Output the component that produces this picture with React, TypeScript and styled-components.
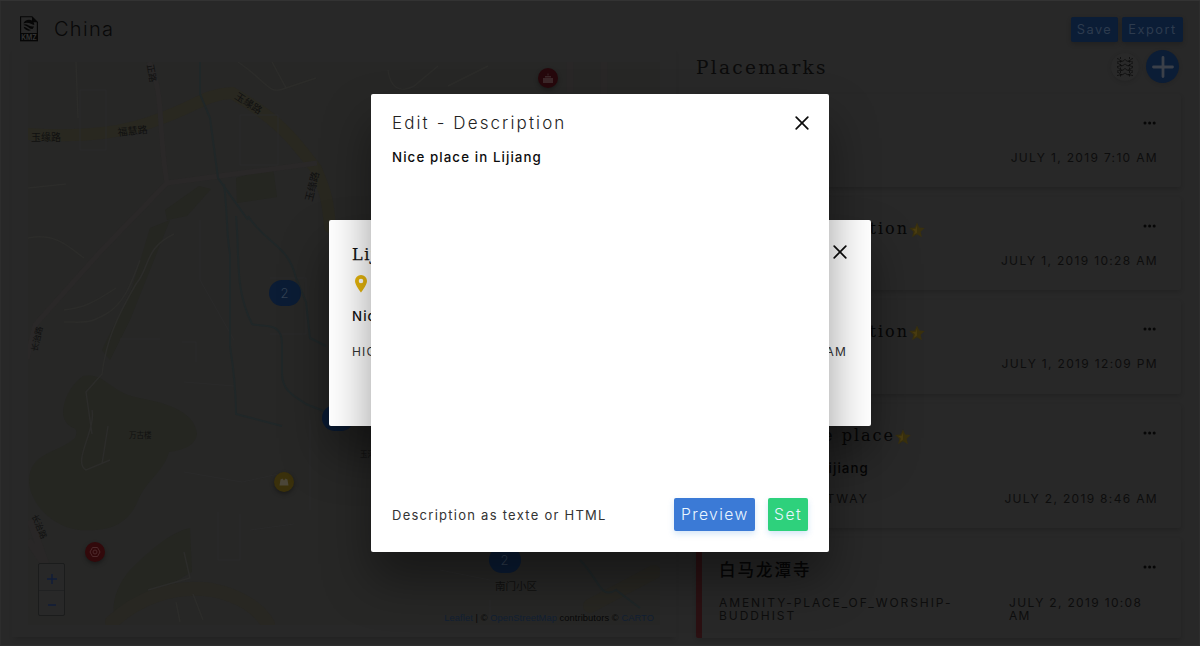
import React from 'react';
import styled, { createGlobalStyle } from 'styled-components';

const sans = `Inter, "Noto Sans", "Noto Sans CJK SC", sans-serif`;
const serif = `"DejaVu Serif", "Liberation Serif", "Noto Sans CJK SC", serif`;

const GlobalStyle = createGlobalStyle`
  *, *::before, *::after { box-sizing: border-box; }
  body { margin: 0; background: #282828; font-family: ${sans}; color: #0a0a0a; overflow: hidden; }
`;

const Page = styled.div`
  position: relative;
  width: 1200px;
  height: 646px;
  overflow: hidden;
  background: #282828;
  box-shadow: inset 0 1px 0 #333, inset 1px 0 0 #2d2d2d, inset -1px 0 0 #2d2d2d, inset 0 -1px 0 #2d2d2d;
`;

const Header = styled.header`
  display: flex;
  align-items: flex-start;
  height: 48px;
  padding: 16px 17px 0 20px;
`;

const DocName = styled.h1`
  margin: 0 auto 0 16px;
  font: 300 20px/26px ${sans};
  letter-spacing: 1.3px;
  color: #080808;
`;

const BarButton = styled.button<{ $width: number }>`
  width: ${p => p.$width}px;
  height: 25px;
  margin: 1px 0 0 4px;
  padding: 0;
  border: 0;
  border-radius: 2px;
  background: #0b1d36;
  color: #2d3b4e;
  font: 400 12.8px/25px ${sans};
  letter-spacing: 1.5px;
  box-shadow: 0 2px 5px rgba(0, 0, 0, 0.2);
`;

const Main = styled.main`
  display: flex;
  height: 598px;
`;

const MapPanel = styled.section`
  width: 664px;
  height: 589px;
  margin-left: 12px;
  padding: 14px 12px 12px 16px;
  box-shadow: 0 4px 5px -2px rgba(0, 0, 0, 0.15);
`;

const MapCanvas = styled.div`
  position: relative;
  width: 632px;
  height: 563px;
  overflow: hidden;
  background: #272726;
`;

const MapArt = styled.svg`
  display: block;
`;

const Pin = styled.div<{ $x: number; $y: number; $color: string }>`
  position: absolute;
  left: ${p => p.$x - 10}px;
  top: ${p => p.$y - 10}px;
  display: flex;
  align-items: center;
  justify-content: center;
  width: 20px;
  height: 20px;
  border-radius: 50%;
  background: ${p => p.$color};
  box-shadow: 0 2px 4px rgba(0, 0, 0, 0.35);
`;

const Cluster = styled.div<{ $x: number; $y: number }>`
  position: absolute;
  left: ${p => p.$x - 15.5}px;
  top: ${p => p.$y - 13}px;
  width: 32px;
  height: 26px;
  border-radius: 13px;
  background: #0b1c35;
  color: #324052;
  font: 300 13px/26px ${sans};
  text-align: center;
`;

const ZoomControl = styled.div`
  position: absolute;
  left: 10px;
  bottom: 9px;
  width: 27px;
  height: 53px;
  border: 1px solid #1b1c1c;
  border-radius: 2px;
  background: #282828;
`;

const ZoomButton = styled.div`
  display: flex;
  align-items: center;
  justify-content: center;
  height: 26px;
  padding-top: 3px;
  & + & { border-top: 1px solid #202122; }
`;

const Attribution = styled.div`
  position: absolute;
  right: 6px;
  bottom: 0;
  font: 9.3px/13px "Liberation Sans", sans-serif;
  letter-spacing: 0.08px;
  white-space: nowrap;
  color: #080808;
  span { color: #111f33; }
`;

const Sidebar = styled.section`
  width: 504px;
  padding: 0 0 0 20px;
`;

const SidebarHead = styled.div`
  display: flex;
  align-items: flex-start;
  height: 46px;
  padding: 2px 1px 0 0;
`;

const SidebarTitle = styled.h2`
  margin: 4px auto 0 0;
  font: 400 18.5px/28px ${serif};
  letter-spacing: 2.3px;
  color: #0b0b0b;
`;

const RoundButton = styled.div<{ $size: number; $bg: string; $top?: number; $gap?: number }>`
  display: flex;
  align-items: center;
  justify-content: center;
  width: ${p => p.$size}px;
  height: ${p => p.$size}px;
  margin: ${p => p.$top ?? 0}px 0 0 ${p => p.$gap ?? 0}px;
  border-radius: 50%;
  background: ${p => p.$bg};
  box-shadow: 0 1px 4px rgba(0, 0, 0, 0.12);
`;

const Card = styled.article<{ $height: number; $accent: string }>`
  display: flex;
  flex-direction: column;
  width: 485px;
  height: ${p => p.$height}px;
  margin-bottom: 10px;
  padding: 19px 24px 0 17px;
  border-left: 6px solid ${p => p.$accent};
  border-radius: 2px;
  box-shadow: 0 2px 4px rgba(0, 0, 0, 0.14);
`;

const CardHead = styled.div`
  display: flex;
  align-items: flex-start;
  height: 26px;
`;

const CardTitle = styled.h3<{ $width?: number; $cjk?: boolean }>`
  display: flex;
  align-items: center;
  justify-content: flex-end;
  width: ${p => (p.$width ? `${p.$width}px` : 'auto')};
  margin: 0 auto 0 0;
  padding-top: ${p => (p.$cjk ? 1 : 0)}px;
  font: ${p => (p.$cjk ? '500 16.5px' : '400 16px')}/26px ${serif};
  letter-spacing: 2px;
  white-space: nowrap;
  color: #060606;
`;

const CardText = styled.p`
  margin: 10px 0 0;
  font: 500 13.3px/18px ${sans};
  letter-spacing: 1.1px;
  color: #050505;
`;

const CardMeta = styled.div<{ $top: number }>`
  display: flex;
  justify-content: space-between;
  margin-top: ${p => p.$top}px;
  font: 400 12px/12.5px ${sans};
  letter-spacing: 1.33px;
  color: #0d0d0d;
`;

const MetaTag = styled.span`
  letter-spacing: 1.93px;
`;

const MetaDate = styled.span<{ $width?: number }>`
  width: ${p => (p.$width ? `${p.$width}px` : 'auto')};
  margin-right: -1px;
  flex: none;
`;

const ModalLayer = styled.div`
  position: absolute;
  inset: 0;
  display: flex;
  align-items: center;
  justify-content: center;
`;

const PlaceModal = styled.div`
  display: flex;
  flex-direction: column;
  width: 542px;
  height: 206px;
  padding: 21px 24px 0 23px;
  border-radius: 2px;
  background: #fff;
  box-shadow: 0 28px 48px rgba(0, 0, 0, 0.4);
`;

const EditModal = styled.div`
  display: flex;
  flex-direction: column;
  width: 458px;
  height: 458px;
  padding: 16px 20px 20.5px 21px;
  border-radius: 2px;
  background: #fff;
  box-shadow: 0 28px 48px rgba(0, 0, 0, 0.4);
`;

const ModalHead = styled.div`
  display: flex;
  align-items: center;
  justify-content: space-between;
`;

const PlaceHead = styled(ModalHead)`
  align-items: flex-start;
  svg { margin-top: 4px; }
`;

const PlaceName = styled.h2`
  margin: 0;
  font: 400 16px/28px ${serif};
  letter-spacing: 1.6px;
  color: #111;
  -webkit-text-stroke: 0.25px #111;
`;

const PinRow = styled.div`
  display: flex;
  height: 20px;
  margin: 6px 0 0 3px;
`;

const PlaceText = styled.p`
  margin: 12px 0 0;
  font: 500 13.3px/18px ${sans};
  letter-spacing: 1.1px;
  color: #111;
`;

const PlaceMeta = styled.div`
  display: flex;
  justify-content: space-between;
  margin-top: 18px;
  font: 400 12px/18px ${sans};
  letter-spacing: 1.2px;
  color: #333;
`;

const EditTitle = styled.h2`
  margin: 0;
  font: 300 17px/26px ${sans};
  letter-spacing: 2.1px;
  color: #222;
`;

const Editor = styled.div`
  flex: 1;
  padding-top: 11px;
  font: 500 13.3px/20px ${sans};
  letter-spacing: 1.1px;
  color: #0c0c0c;
`;

const EditFoot = styled.div`
  display: flex;
  align-items: center;
  height: 34px;
  margin-right: 0.7px;
`;

const Hint = styled.span`
  margin-right: auto;
  font: 400 13px/20px ${sans};
  letter-spacing: 1.26px;
  color: #333;
`;

const ActionButton = styled.button<{ $width: number; $bg: string }>`
  width: ${p => p.$width}px;
  height: 33px;
  margin-left: 12.5px;
  padding: 0;
  border: 0;
  border-radius: 2px;
  background: ${p => p.$bg};
  color: #eaf6ff;
  font: 300 15.7px/33px ${sans};
  letter-spacing: 1.4px;
  box-shadow: 0 3px 6px rgba(60, 140, 220, 0.22);
`;

const KmzIcon = () => (
  <svg width="18" height="26" viewBox="0 0 18 26">
    <path d="M.6 17V.8H12l5.4 5.4V17" fill="none" stroke="#060606" strokeWidth="1.1" />
    <path d="M12 .8V6.2h5.4z" fill="#060606" />
    <path d="M3.4 7.600C4.500 3.300 11 2.300 13.300 5.800c.7 1.100 1 2.200 1 3.300C11.500 8.800 8.500 5.200 3.400 7.600z" fill="#060606" />
    <path d="M3.200 8.900C7 6.800 9 11.300 14 10.500c-.3 1-.8 1.800-1.500 2.400C9.500 13.300 7 9 3.200 8.900z" fill="#060606" />
    <path d="M3.600 10.800C6.500 10.800 7.500 13.700 11 14 8.500 15.500 4.700 14.300 3.600 10.800z" fill="#060606" />
    <rect y="17" width="18" height="8.300" fill="#060606" />
    <text x="9" y="23.700" textAnchor="middle" fontFamily="Inter, sans-serif" fontSize="7" fontWeight="700" fill="#333" textLength="15.500" lengthAdjust="spacingAndGlyphs">KMZ</text>
  </svg>
);

const CloseIcon = () => (
  <svg width="14" height="14" viewBox="0 0 14 14" fill="none" stroke="#0b0b0b" strokeWidth="1.700" strokeLinecap="round">
    <path d="M1.200 1.200l11.600 11.600M12.800 1.200L1.200 12.800" />
  </svg>
);

const DotsIcon = styled.svg`
  margin-top: 8px;
`;

const Dots = () => (
  <DotsIcon width="14" height="4" viewBox="0 0 14 4" fill="#060606">
    <circle cx="2" cy="2" r="1.500" />
    <circle cx="6.600" cy="2" r="1.500" />
    <circle cx="11.200" cy="2" r="1.500" />
  </DotsIcon>
);

const StarIcon = styled.svg`
  flex: none;
  margin-top: 2px;
`;

const Star = () => (
  <StarIcon width="16" height="16" viewBox="0 0 16 16">
    <path d="M8 .5l2.200 5 5.600.5-4.200 3.700 1.300 5.600L8 12.300l-4.900 3 1.300-5.600L.2 6l5.600-.5z" fill="#39300e" />
    <path d="M8 3.500v7.300l-3 1.900.9-3.500L3.200 7l3.500-.3z" fill="#493c10" />
  </StarIcon>
);

const Layers = () => (
  <svg width="18" height="20" viewBox="0 0 18 20" fill="none" stroke="#0d0d0d" strokeWidth="0.800">
    {[1.5, 6, 10.500, 15].map(y => (
      <g key={y} transform={`translate(0 ${y})`}>
        <path d="M1 0c2 0 3 2.800 5 2.800S8 1 9 1s1 1.800 3 1.800S15 0 17 0" />
        <path d="M1 3.500c2 0 3-1.200 5-.7M17 3.500c-2 0-3-1.200-5-.7" />
      </g>
    ))}
    <path d="M4.500 0v20M13.500 0v20" strokeDasharray="2 1.500" />
  </svg>
);

const MapDrawing = () => (
  <MapArt width="632" height="563" viewBox="28 62 632 563">
    <g fill="#252621">
      <path d="M83 376c-14 10-20 26-20 38 4 20 18 8 12 24-18 16-46 14-46 44 2 22 22 44 50 48 32 2 50-6 60-32 10-20 24-26 30-46 14-2 26-6 28-18-2-20-24-30-58-36-30-6-34-26-56-22z" />
      <path d="M190 528c-20 4-44 26-60 42-14 16-20 38-14 48 20-8 46-30 76-46z" />
      <path d="M236 178l37-11 4 30-40 6zM165 210l34-24 12 3-24 27-20 4z" />
      <path d="M150 228l20-8-40 100-20 40-8-10 30-62z" />
    </g>
    <g fill="none" stroke="#292820" strokeLinecap="round">
      <path d="M28 134c60 4 100-2 134-16 34-12 44-24 70-25 50 28 64 50 84 76 10 24 12 32 14 58" strokeWidth="12" />
      <path d="M112 622c24-22 60-38 100-32 30 6 48 20 56 34M590 606l64-34" strokeWidth="14" stroke="#282722" />
    </g>
    <g fill="none" stroke="#2a2828">
      <path d="M149 62c16 34 8 62 18 121l-66 68-66 74-8 34M167 183l150-20" strokeWidth="5" />
      <path d="M28 540l20 30M30 520l18 50M570 62v30M604 62v32" strokeWidth="7" stroke="#292727" />
    </g>
    <g fill="none" stroke="#2c2c2a" strokeWidth="1.500">
      <path d="M76 62l2 56M28 188l38-4M28 238c28-6 42 10 56 20M174 234c-30 14-24 34-38 50-20 34-30 58-34 90l-16 18 6 42M140 260c-8 22-16 44-34 54s-20 8-42 8M64 310c18-2 28-6 52-22M92 410c4 20-20 52-6 60l24-10M108 426l-6 38M148 590l42-12-6-26M176 602l4 20M193 594l10 26M238 62c30 20 30 34 48 26l-14-26M286 88l30-10" />
      <path d="M388 70c2 16 10 24 26 16l24-20M448 86l40-20" />
    </g>
    <g fill="none" stroke="#2a2a2a">
      <path d="M80 90h26v60H80zM240 115h38v50h-38zM200 220v60l34 60M270 278h36v56h-36M120 339h40M182 342h14v20M184 382l50 4M184 472l58 10 46-10M218 512v48h22v-46M250 530l44-6M310 420v90M440 570l50 10M490 600v20" />
    </g>
    <g fill="none" stroke="#202728" strokeWidth="2">
      <path d="M200 62v32l10 24 8 60 30 42M224 184c4 34 2 48 6 70v92c4 26 6 52 6 68l46 12M236 216c4 40-2 72 16 108 10 4 30-4 30 20v30c0 18 16 24 24 30l20 8M248 216c18 28 40 28 48 62l10 24 4 36 16 8M580 560c20 20 20 40 36 30l24 18" />
    </g>
    <g fontFamily="'Noto Sans CJK SC', sans-serif" fontSize="10" fill="#101010">
      <text x="31" y="141">玉缘路</text>
      <text transform="translate(118 136) rotate(-6)">福慧路</text>
      <text transform="translate(234 98) rotate(33)">玉缘路</text>
      <text transform="translate(312 202) rotate(-76)">玉缘路</text>
      <text transform="translate(147 65) rotate(80)" fontSize="9">正路</text>
      <text transform="translate(37 352) rotate(-77)" fontSize="8.500">长治路</text>
      <text transform="translate(31.500 516) rotate(67)" fontSize="8.500">长治路</text>
      <text x="129" y="438" fontSize="7.500">万古楼</text>
      <text x="360" y="457" fontSize="7.500">玉河</text>
      <text x="495" y="590" fontSize="10.500">南门小区</text>
    </g>
  </MapArt>
);

type Place = {
  title: string;
  titleWidth?: number;
  cjk?: boolean;
  star?: boolean;
  text?: string;
  tag?: string;
  date: string;
  dateWidth?: number;
  height: number;
  accent?: string;
};

const places: Place[] = [
  { title: 'Lijiang', date: 'JULY 1, 2019 7:10 AM', height: 93 },
  { title: 'Train station', titleWidth: 206, star: true, date: 'JULY 1, 2019 10:28 AM', height: 93 },
  { title: 'Coach station', titleWidth: 206, star: true, date: 'JULY 1, 2019 12:09 PM', height: 93.5 },
  { title: 'Lijiang nice place', titleWidth: 192, star: true, text: 'Nice place in Lijiang', tag: 'HIGHWAY-FOOTWAY', date: 'JULY 2, 2019 8:46 AM', height: 124.5 },
  { title: '白马龙潭寺', cjk: true, tag: 'AMENITY-PLACE_OF_WORSHIP-BUDDHIST', date: 'JULY 2, 2019 10:08 AM', dateWidth: 149, height: 100, accent: '#2b1012' },
];

const App = () => (
  <>
    <GlobalStyle />
    <Page>
      <Header>
        <KmzIcon />
        <DocName>China</DocName>
        <BarButton $width={47}>Save</BarButton>
        <BarButton $width={61}>Export</BarButton>
      </Header>
      <Main>
        <MapPanel>
          <MapCanvas>
            <MapDrawing />
            <Cluster $x={256} $y={231}>2</Cluster>
            <Cluster $x={309} $y={356}>3</Cluster>
            <Cluster $x={476} $y={498}>2</Cluster>
            <Pin $x={520} $y={16} $color="#26080c">
              <svg width="12" height="11" viewBox="0 0 12 11" fill="#3b2729"><path d="M1 5h10v5H1zM3 3h6v1.500H3zM5.500.5h1v2h-1z" /></svg>
            </Pin>
            <Pin $x={256} $y={420} $color="#3a300b">
              <svg width="10" height="8" viewBox="0 0 10 8" fill="#4b4638"><path d="M.5 7.500l1-6L3.500.5 5 2.500 6.500.5l2 1 1 6z" /></svg>
            </Pin>
            <Pin $x={67} $y={490} $color="#32090b">
              <svg width="12" height="12" viewBox="0 0 12 12" fill="none" stroke="#4d292b"><path d="M3.500 1.500h5l2.500 4.500-2.500 4.500h-5L1 6z" /><circle cx="6" cy="6" r="2" /></svg>
            </Pin>
            <ZoomControl>
              <ZoomButton><svg width="10" height="10"><path d="M5 0v10M0 5h10" stroke="#111d38" strokeWidth="1.500" /></svg></ZoomButton>
              <ZoomButton><svg width="8" height="2"><path d="M0 1h8" stroke="#111d38" strokeWidth="1.500" /></svg></ZoomButton>
            </ZoomControl>
            <Attribution><span>Leaflet</span> | © <span>OpenStreetMap</span> contributors © <span>CARTO</span></Attribution>
          </MapCanvas>
        </MapPanel>
        <Sidebar>
          <SidebarHead>
            <SidebarTitle>Placemarks</SidebarTitle>
            <RoundButton $size={28} $bg="#292929" $top={3}><Layers /></RoundButton>
            <RoundButton $size={33} $bg="#0b1d36" $gap={7}>
              <svg width="22" height="22"><path d="M11 1.500v19M1.500 11h19" stroke="#3b4049" strokeWidth="2.800" strokeLinecap="round" /></svg>
            </RoundButton>
          </SidebarHead>
          {places.map(p => (
            <Card key={p.date} $height={p.height} $accent={p.accent ?? '#282828'}>
              <CardHead>
                <CardTitle $width={p.titleWidth} $cjk={p.cjk}>
                  {p.title}
                  {p.star && <Star />}
                </CardTitle>
                <Dots />
              </CardHead>
              {p.text && <CardText>{p.text}</CardText>}
              <CardMeta $top={p.text ? 16 : p.accent ? 14 : 13}>
                <MetaTag>{p.tag}</MetaTag>
                <MetaDate $width={p.dateWidth}>{p.date}</MetaDate>
              </CardMeta>
            </Card>
          ))}
        </Sidebar>
      </Main>

      <ModalLayer>
        <PlaceModal>
          <PlaceHead>
            <PlaceName>Lijiang nice place</PlaceName>
            <CloseIcon />
          </PlaceHead>
          <PinRow>
            <svg width="12" height="18" viewBox="0 0 12 18">
              <path fillRule="evenodd" d="M6 0a6 6 0 0 0-6 6c0 4.300 6 11.500 6 11.500S12 10.300 12 6a6 6 0 0 0-6-6zm0 3.700a2.300 2.300 0 1 1 0 4.600 2.300 2.300 0 0 1 0-4.600z" fill="#e5b50c" />
            </svg>
          </PinRow>
          <PlaceText>Nice place in Lijiang</PlaceText>
          <PlaceMeta>
            <span>HIGHWAY-FOOTWAY</span>
            <span>JULY 2, 2019 8:46 AM</span>
          </PlaceMeta>
        </PlaceModal>
      </ModalLayer>

      <ModalLayer>
        <EditModal>
          <ModalHead>
            <EditTitle>Edit - Description</EditTitle>
            <CloseIcon />
          </ModalHead>
          <Editor>Nice place in Lijiang</Editor>
          <EditFoot>
            <Hint>Description as texte or HTML</Hint>
            <ActionButton $width={81} $bg="#3b7ad6">Preview</ActionButton>
            <ActionButton $width={40.5} $bg="#2ed17c">Set</ActionButton>
          </EditFoot>
        </EditModal>
      </ModalLayer>
    </Page>
  </>
);

export default App;
